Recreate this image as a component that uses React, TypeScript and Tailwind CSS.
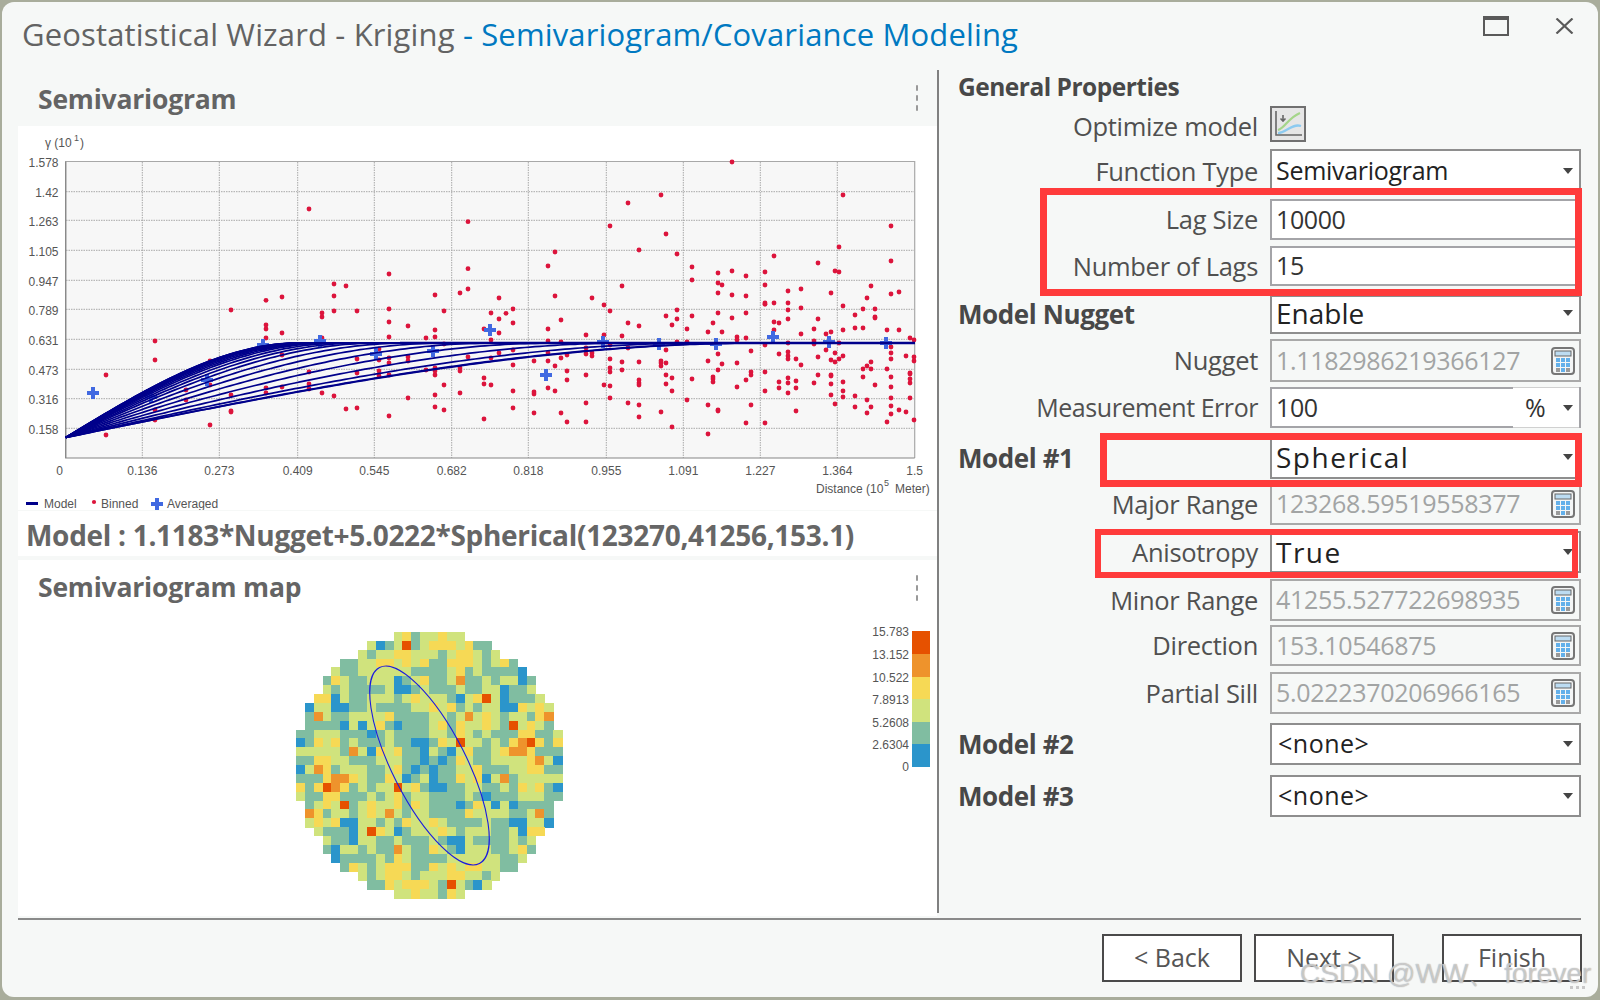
import type { ReactNode } from 'react';

// binned points, read off the plot in 3x crops: [offsetX, offsetY, [x, y, ...]]
const binned: [number, number, number[]][] = [
  [0, 0, [927,627,1404,665,1404,806,1167,822,1002,852,1038,858,1002,888,846,891,1305,885,1380,879,1404,867,1497,894]],
  [0, 300, [798,1,693,30,966,39,966,51,1002,33,1071,33,1167,27,1332,33,1473,39,1497,57,1167,66,798,75,798,87,1224,78,1305,90,846,99,1452,87,1497,99,465,123,798,114,966,114,1167,111,1278,114,1305,111,1473,120,1332,132,1497,159,465,180,630,183,846,165,1071,177,1137,147,1137,180,1167,174,1167,189,1224,171,1224,183,1305,204,1305,213,1305,225,1278,210,1404,171,1473,174,1380,204,1380,213,318,225,558,270,630,255,798,264,798,279,846,261,927,216,927,252,927,267,1071,219,1137,213,1137,228,1167,225,1332,255,1452,234,1452,252,1473,255,558,300,693,285,966,279,1002,288,1224,294,1305,285,1380,279,465,330,693,333,693,336,1038,327,1071,324,1167,348,1305,321,1332,330,465,360,630,375,1452,357,318,405]],
  [500, 100, [696,186,483,285,1029,285,384,309,330,378,1173,378,498,402,1017,441,417,450,165,456,531,462,822,468,954,489,144,498,576,501,1173,483,696,513,795,516,654,519,1005,513,1017,516,738,528,576,540,654,549,666,555,795,555,366,558,1113,558,864,573,903,567,654,579,993,579,696,585,738,588,165,588,276,594,1173,582,1197,576,1101,594]],
  [500, 300, [795,9,795,13,822,9,864,9,903,24,312,15,330,33,531,30,1029,18,1089,27,1125,27,864,30,18,40,39,27,498,48,531,57,576,48,654,39,696,54,738,39,864,57,954,57,1065,45,1125,51,1125,54,39,69,183,60,384,69,417,78,516,75,639,69,822,66,837,69,144,87,561,87,624,96,666,96,942,87,1029,90,1065,84,1089,84,1161,90,1197,90,258,105,312,105,366,108,711,111,738,114,903,102,978,102,993,96,822,90,1230,114,1242,120,144,123,183,126,531,126,561,126,711,120,942,123,942,132,1017,129,864,129,795,135,330,135,258,144,39,150,384,144,498,150,654,162,753,153,837,162,864,156,864,168,864,177,888,177,978,150,954,171,1005,159,1017,177,1029,168,1005,186,993,180,1113,186,1173,141,1173,159,1173,177,1218,168,1242,171,1242,183,144,159,258,162,276,159,276,168,201,165,183,174,102,183,144,183,330,177,366,186,417,186,483,183,483,189,498,189,483,198,624,183,666,192,711,189,903,195,39,195,165,198,330,204,330,216,366,210,654,210,753,216,753,225,795,216,1089,207,1101,198,1113,207,1161,207,201,213,258,225,498,225,516,234,576,237,639,231,639,237,639,246,738,240,837,246,864,234,864,249,888,243,954,225,993,225,993,228,942,249,1029,246,1089,231,1173,231,1230,219,1230,222,1230,237,1230,249,201,240,417,240,417,249,417,255,312,255,330,258,498,252,711,261,837,264,888,264,993,252,1125,255,1173,261,144,264,39,273,102,276,102,282,165,273,516,273,795,273,864,279,1029,273,993,285,1029,291,1065,288,1173,294,1230,294,330,294,561,300,1101,300,258,309,384,309,417,315,624,315,654,330,654,333,753,315,1005,312,1065,321,1113,321,1173,318,1197,330,1218,336,888,333,39,324,102,339,183,339,483,336,1101,339,1173,342,201,366,258,366,417,351,738,369,795,369,1161,366,1242,360,516,381,624,402]],
];

const dots: [number, number][] = binned.flatMap(([ox, oy, pts]) => {
  const out: [number, number][] = [];
  for (let i = 0; i < pts.length; i += 2) out.push([ox + pts[i] / 3, oy + pts[i + 1] / 3]);
  return out;
});

const averaged = [[93,393],[151,397],[207,380],[263,345],[320,341],[376,354],[433,351],[490,330],[546,375],[603,342],[659,344],[716,344],[773,337],[829,342],[886,343]];

const xTicks = [
  ['0', 65.7], ['0.136', 142.3], ['0.273', 219.3], ['0.409', 297.7], ['0.545', 374.3], ['0.682', 451.7],
  ['0.818', 528.3], ['0.955', 606.3], ['1.091', 683.3], ['1.227', 760.3], ['1.364', 837.3], ['1.5', 914.7],
] as const;

const yTicks = [
  ['1.578', 161.5], ['1.42', 191.7], ['1.263', 220.3], ['1.105', 250.3], ['0.947', 280.3], ['0.789', 309.3],
  ['0.631', 339.3], ['0.473', 369.3], ['0.316', 398.7], ['0.158', 428.3],
] as const;

// spherical model per direction, range swept between minor and major axis
function curvePath(deg: number) {
  const t = (deg * Math.PI) / 180;
  const major = 697;
  const minor = 233;
  const a = 1 / Math.sqrt((Math.cos(t) / major) ** 2 + (Math.sin(t) / minor) ** 2);
  let d = 'M65.7 437.5';
  for (let x = 70; x <= 915; x += 5) {
    const r = Math.min((x - 65.7) / a, 1);
    d += ` L${x} ${(437.5 - 94.5 * (1.5 * r - 0.5 * r ** 3)).toFixed(1)}`;
  }
  return d;
}
const curves = [0, 3, 9, 15, 21, 27, 33, 39, 45, 50, 55, 60, 64, 68, 72, 76, 80, 84, 87, 90].map(curvePath);

const cellColors: Record<string, string> = {
  b: '#2b95cb', g: '#80bda1', y: '#d0e37d', Y: '#f6d955', o: '#ee932c', r: '#e65100',
};

// semivariogram surface: [first column, cells]
const surface: [number, string][] = [
  [11, 'yYgyyYyy'],
  [8, 'ybgyrgyYYYyYgg'],
  [7, 'ygyyYYyyygyYYygy'],
  [5, 'ggyyYYyYyYggYYYygyYg'],
  [4, 'yggyyyyyyggggyYgyggggb'],
  [3, 'gYyggyyybgyYggyoggygyybg'],
  [3, 'ygyggggybbgygggyggyybggy'],
  [2, 'YYbyggyyygyYyyygbyYrybgggy'],
  [1, 'byybbggyggggyyYyYgygyybbYyYy'],
  [1, 'goyggyyyyYggggyygyoyYygyygYo'],
  [1, 'ggggbybyYgbgggyYgYyyYygryYyg'],
  [0, 'ggyyygggbgyggggyygYygygggYYggy'],
  [0, 'bgYyYgygggyggbbgYyryygygYorYgY'],
  [0, 'yyyyygoybYyYggbygbyYggyYooYggg'],
  [0, 'ggYYyygggyyyggbgbgYyggyyyyYoyb'],
  [0, 'byoYgyyyggyYgbgbggyyYgggyyYYgg'],
  [0, 'gggYooYyggYybgybggYyYbyogyyyyy'],
  [0, 'YgYroYgygyyryYgbbggyyggygYyYgb'],
  [0, 'yggYYgggygyYgyyggggygbgggyyygg'],
  [1, 'gyYyrgyYyyYgYygggbgYybybgggg'],
  [1, 'oYgyygyYyoygyyggggYyyyyggyog'],
  [1, 'yYyYbbyygygYyyYyggggyggbbyyb'],
  [2, 'ygggbyrYybgyyyYygyyyggybYY'],
  [3, 'yggbyyggygggygbbyggggygy'],
  [3, 'gbyygyggoyggYygbyyyggyYg'],
  [4, 'bggggygYyggggyyyyyyggy'],
  [5, 'gYygyYYYggYyYyYYyygg'],
  [7, 'ygyYYygyyyYYyygy'],
  [8, 'ggYyYYYygrygby'],
  [11, 'yyYyygYy'],
];

const scale: [string, number, number, string][] = [
  ['#e65100', 631, 654, '15.783'],
  ['#ee932c', 654, 677, '13.152'],
  ['#f6d955', 677, 699, '10.522'],
  ['#d0e37d', 699, 722, '7.8913'],
  ['#80bda1', 722, 744, '5.2608'],
  ['#2b95cb', 744, 767, '2.6304'],
];

function Plus({ x, y, s = 12, t = 4 }: { x: number; y: number; s?: number; t?: number }) {
  return (
    <g fill="#4169e1">
      <rect x={x - s / 2} y={y - t / 2} width={s} height={t} />
      <rect x={x - t / 2} y={y - s / 2} width={t} height={s} />
    </g>
  );
}

function SemivariogramChart() {
  return (
    <svg viewBox="18 126 919 384" className="block h-[384px] w-[919px] bg-white font-['Liberation_Sans',sans-serif] text-[12px]">
      <rect x="65.7" y="161.5" width="849" height="296.5" fill="#f7f7f7" />
      {xTicks.slice(1, -1).map(([, x]) => (
        <line key={x} x1={x} x2={x} y1="162" y2="458" stroke="#a8a8a8" strokeDasharray="1.5 1" />
      ))}
      {yTicks.slice(1).map(([, y]) => (
        <line key={y} x1="66" x2="914" y1={y} y2={y} stroke="#a8a8a8" strokeDasharray="1.5 1" />
      ))}
      <path d="M65.7 458V161.5H914.7V458" fill="none" stroke="#a8a8a8" strokeWidth="1.2" />
      <path d="M65.7 161.5V458H914.7" fill="none" stroke="#858585" strokeWidth="1.2" />
      {dots.map(([x, y], i) => (
        <circle key={i} cx={x} cy={y} r="2.4" fill="#dc143c" />
      ))}
      {averaged.map(([x, y]) => (
        <Plus key={x} x={x} y={y} />
      ))}
      {curves.map((d) => (
        <path key={d} d={d} fill="none" stroke="#00008b" strokeWidth="1.7" />
      ))}
      <line x1="400" x2="915" y1="343" y2="343" stroke="#00008b" strokeWidth="2.6" />
      {yTicks.map(([label, y]) => (
        <text key={label} x="58.5" y={y + 5.5} textAnchor="end" fill="#555">{label}</text>
      ))}
      {xTicks.map(([label, x]) => (
        <text key={label} x={x - (label === '0' ? 6 : 0)} y="475" textAnchor="middle" fill="#555">{label}</text>
      ))}
      <text x="45" y="147" fill="#555">γ (10</text>
      <text x="74" y="141" fill="#555" className="text-[9px]">1</text>
      <text x="80" y="147" fill="#555">)</text>
      <text x="816" y="493" fill="#555">Distance (10</text>
      <text x="884" y="486" fill="#555" className="text-[9px]">5</text>
      <text x="895" y="493" fill="#555">Meter)</text>
      <rect x="26" y="502" width="12" height="3" fill="#00008b" />
      <text x="44" y="508" fill="#555">Model</text>
      <circle cx="94" cy="502" r="2.1" fill="#dc143c" />
      <text x="101" y="508" fill="#555">Binned</text>
      <Plus x={157} y={504} />
      <text x="167" y="508" fill="#555">Averaged</text>
    </svg>
  );
}

function SurfaceMap() {
  const cell = 8.87;
  return (
    <svg viewBox="18 616 919 300" className="block h-[300px] w-[919px] font-['Liberation_Sans',sans-serif] text-[12px]">
      <g shapeRendering="crispEdges">
        {surface.map(([start, cells], r) =>
          cells.split('').map((c, i) => (
            <rect
              key={`${r}-${i}`}
              x={296 + (start + i) * cell}
              y={632 + r * cell}
              width={cell + 0.4}
              height={cell + 0.4}
              fill={cellColors[c]}
            />
          )),
        )}
        {scale.map(([color, y1, y2]) => (
          <rect key={color} x="912" y={y1} width="18" height={y2 - y1} fill={color} />
        ))}
      </g>
      <ellipse cx="429.5" cy="765.5" rx="36.8" ry="110" transform="rotate(-27 429.5 765.5)" fill="none" stroke="#1a1ae0" strokeWidth="1.1" />
      {scale.map(([color, y, , label]) => (
        <text key={color} x="909" y={y + 5} textAnchor="end" fill="#555">{label}</text>
      ))}
      <text x="909" y="771" textAnchor="end" fill="#555">0</text>
    </svg>
  );
}

function Kebab() {
  return (
    <div className="flex flex-col gap-[4px]">
      <span className="h-[6px] w-[2px] rounded-full bg-[#999]" />
      <span className="h-[6px] w-[2px] rounded-full bg-[#999]" />
      <span className="h-[6px] w-[2px] rounded-full bg-[#999]" />
    </div>
  );
}

function PanelHeader({ title, titleClass = '' }: { title: string; titleClass?: string }) {
  return (
    <div className="flex h-[56px] items-center justify-between pl-[20px] pr-[19px]">
      <h2 className={`text-[26.5px] font-bold tracking-[-0.2px] text-[#646464] ${titleClass}`}>{title}</h2>
      <Kebab />
    </div>
  );
}

function Caret() {
  return (
    <svg viewBox="0 0 10 6" className="h-[6px] w-[10px] shrink-0 fill-[#444]">
      <path d="M0 0h10L5 6z" />
    </svg>
  );
}

function CalculatorIcon() {
  return (
    <svg viewBox="0 0 24 28" className="h-[28px] w-[24px] shrink-0">
      <rect x="1" y="1" width="22" height="26" rx="3" fill="#f4f6f6" stroke="#767676" strokeWidth="2" />
      <rect x="4" y="4" width="16" height="5" fill="#bcdcf2" stroke="#666" strokeWidth="1" />
      <g fill="#63b0ea">
        <rect x="5" y="11" width="4" height="4" /><rect x="10" y="11" width="4" height="4" /><rect x="15" y="11" width="4" height="4" />
        <rect x="5" y="16" width="4" height="4" /><rect x="10" y="16" width="4" height="4" /><rect x="15" y="16" width="4" height="4" />
        <rect x="10" y="21" width="4" height="4" />
      </g>
      <rect x="5" y="21" width="4" height="4" fill="#9a9a9a" />
      <rect x="15" y="21" width="4" height="4" fill="#9a9a9a" />
    </svg>
  );
}

function Row({ label, bold, className, labelClass = 'text-[25.5px] tracking-[-0.3px]', children }: { label?: string; bold?: boolean; className: string; labelClass?: string; children: ReactNode }) {
  return (
    <div className={`flex items-center ${className}`}>
      <div
        className={
          bold
            ? 'w-[312px] shrink-0 text-[26px] font-bold tracking-[-0.4px] text-[#484848]'
            : `mr-[12px] w-[300px] shrink-0 text-right text-[#505050] ${labelClass}`
        }
      >
        {label}
      </div>
      {children}
    </div>
  );
}

function Select({ value, textClass = 'text-[25px] tracking-[-0.3px]' }: { value: string; textClass?: string }) {
  return (
    <div className={`flex h-full w-[311px] items-center justify-between border-2 border-[#8e8e8e] bg-white pr-[6px] text-[#222] ${textClass}`}>
      <span>{value}</span>
      <Caret />
    </div>
  );
}

function Input({ value }: { value: string }) {
  return (
    <div className="flex h-full w-[311px] items-center border-2 border-[#a4a4a8] bg-white pl-[4px] text-[25px] tracking-[-0.4px] text-[#333]">
      {value}
    </div>
  );
}

function Disabled({ value }: { value: string }) {
  return (
    <div className="flex h-full w-[311px] items-center justify-between border-2 border-[#a9a9a9] pl-[4px] pr-[4px] text-[25px] tracking-[-0.3px] text-[#a2a4a4]">
      <span>{value}</span>
      <CalculatorIcon />
    </div>
  );
}

function WizardButton({ label, className = '' }: { label: string; className?: string }) {
  return (
    <button className={`h-[48px] w-[140px] border-2 border-[#4a4a4a] bg-white text-[25px] text-[#555] ${className}`}>
      {label}
    </button>
  );
}

export default function App() {
  return (
    <div className="relative h-[1000px] w-[1600px] overflow-hidden bg-[#a9ad9c] p-[2px] font-['Open_Sans',sans-serif]">
      <div className="h-[995px] w-[1596px] overflow-hidden rounded-[12px] bg-[#f6f8f7]">
        {/* title bar */}
        <div className="flex h-[68px] items-start justify-between pr-[24px]">
          <h1 className="ml-[20px] mt-[9px] text-[31px] tracking-[0.15px] text-[#636363]">
            Geostatistical Wizard - Kriging <span className="text-[#0079c1]">- Semivariogram/Covariance Modeling</span>
          </h1>
          <div className="mt-[14px] flex items-start gap-[46px]">
            <div className="h-[20px] w-[26px] border-2 border-t-4 border-[#5a5a5a]" />
            <svg viewBox="0 0 19 16" className="mt-[2px] h-[16px] w-[19px]">
              <path d="M1.5 0.5L17.5 15.5M17.5 0.5L1.5 15.5" stroke="#5a5a5a" strokeWidth="2.2" fill="none" />
            </svg>
          </div>
        </div>

        {/* main */}
        <div className="flex h-[846px] pl-[16px]">
          <div className="w-[919px] shrink-0">
            <PanelHeader title="Semivariogram" titleClass="pt-[3px]" />
            <SemivariogramChart />
            <div className="mt-[1px] flex h-[45px] items-center bg-white pl-[8px] pt-[3px] text-[28px] font-bold tracking-[-0.3px] text-[#666]">
              Model : 1.1183*Nugget+5.0222*Spherical(123270,41256,153.1)
            </div>
            <div className="mt-[4px] h-[356px] bg-white">
              <PanelHeader title="Semivariogram map" />
              <SurfaceMap />
            </div>
          </div>
          <div className="h-[843px] w-[2px] shrink-0 bg-[#808080]" />
          <div className="flex-1 pl-[19px]">
            <div className="flex h-[34px] items-center text-[24.5px] font-bold tracking-[-0.5px] text-[#484848]">General Properties</div>
            <Row label="Optimize model" className="mt-[2px] h-[36px]" labelClass="pt-[4px] text-[25.5px] tracking-[-0.3px]">
              <div className="h-[36px] w-[36px] border-2 border-[#707070] bg-[#e6e6e6]">
                <svg viewBox="0 0 32 32" className="h-full w-full">
                  <path d="M4 3V27H30" fill="none" stroke="#666" strokeWidth="1.6" />
                  <path d="M11 7V13M8.5 10.5L11 13L13.5 10.5" fill="none" stroke="#666" strokeWidth="1.6" />
                  <path d="M6 22C13 20 16 10 28 5" fill="none" stroke="#a5d58a" strokeWidth="2.2" />
                  <path d="M6 25C14 25 20 15 29 18" fill="none" stroke="#8ccaf0" strokeWidth="2.2" />
                </svg>
              </div>
            </Row>
            <Row label="Function Type" className="mt-[7px] h-[44px]"><Select value="Semivariogram" textClass="pl-[4px] text-[25px] tracking-[-0.3px]" /></Row>
            <Row label="Lag Size" className="mt-[6px] h-[41px]"><Input value="10000" /></Row>
            <Row label="Number of Lags" className="mt-[6px] h-[40px]"><Input value="15" /></Row>
            <Row label="Model Nugget" bold className="mt-[9px] h-[39px]"><Select value="Enable" textClass="pl-[4px] pb-[3px] text-[28px]" /></Row>
            <Row label="Nugget" className="mt-[5px] h-[43px]"><Disabled value="1.1182986219366127" /></Row>
            <Row label="Measurement Error" className="mt-[5px] h-[41px]" labelClass="text-[25px] tracking-[-0.45px]">
              <div className="flex h-full w-[311px] items-center justify-between border-2 border-[#a4a4a8] bg-white pl-[4px] text-[25px] tracking-[-0.4px] text-[#333]">
                <span>100</span>
                <div className="-my-[2px] flex h-[41px] w-[66px] items-center justify-between border-y border-[#d0d0d0] bg-white pl-[12px] pr-[6px]">
                  <span>%</span>
                  <Caret />
                </div>
              </div>
            </Row>
            <Row label="Model #1" bold className="mt-[10px] h-[41px]"><Select value="Spherical" textClass="pl-[4px] pb-[3px] text-[28px] tracking-[1.5px]" /></Row>
            <Row label="Major Range" className="mt-[4px] h-[42px]" labelClass="pt-[1px] text-[25.5px] tracking-[-0.3px]"><Disabled value="123268.59519558377" /></Row>
            <Row label="Anisotropy" className="mt-[6px] h-[42px]" labelClass="pt-[1px] text-[25.5px] tracking-[-0.3px]"><Select value="True" textClass="pl-[4px] text-[28px] tracking-[1.5px]" /></Row>
            <Row label="Minor Range" className="mt-[6px] h-[42px]"><Disabled value="41255.527722698935" /></Row>
            <Row label="Direction" className="mt-[4px] h-[41px]"><Disabled value="153.10546875" /></Row>
            <Row label="Partial Sill" className="mt-[6px] h-[42px]"><Disabled value="5.0222370206966165" /></Row>
            <Row label="Model #2" bold className="mt-[9px] h-[42px]"><Select value="<none>" textClass="pl-[6px] text-[25px] tracking-[0.5px]" /></Row>
            <Row label="Model #3" bold className="mt-[10px] h-[42px]"><Select value="<none>" textClass="pl-[6px] text-[25px] tracking-[0.5px]" /></Row>
          </div>
        </div>

        {/* footer */}
        <div className="ml-[16px] mr-[17px] mt-[2px] h-[2px] bg-[#8a8a8a]" />
        <div className="mt-[14px] flex justify-end pr-[16px]">
          <WizardButton label="< Back" />
          <WizardButton label="Next >" className="ml-[12px]" />
          <WizardButton label="Finish" className="ml-[48px]" />
        </div>
      </div>

      {/* red annotations drawn on the screenshot */}
      <div className="absolute left-[1040px] top-[188px] h-[108px] w-[542px] border-[7px] border-[#ff3b3b]" />
      <div className="absolute left-[1100px] top-[433px] h-[54px] w-[482px] border-[7px] border-[#ff3b3b]" />
      <div className="absolute left-[1095px] top-[529px] h-[49px] w-[483px] border-[6px] border-[#ff3b3b]" />

      {/* watermark */}
      <div className="absolute left-[1300px] top-[953px] font-['Liberation_Sans',sans-serif] text-[28px] text-white/50 [text-shadow:0_0_1px_#888]">
        CSDN @WW、 forever
      </div>
      <div className="absolute left-[1570px] top-[986px] flex gap-[3px]">
        <span className="h-[3px] w-[3px] bg-[#c8c8c8]" />
        <span className="h-[3px] w-[3px] bg-[#c8c8c8]" />
        <span className="h-[3px] w-[3px] bg-[#c8c8c8]" />
      </div>
    </div>
  );
}
